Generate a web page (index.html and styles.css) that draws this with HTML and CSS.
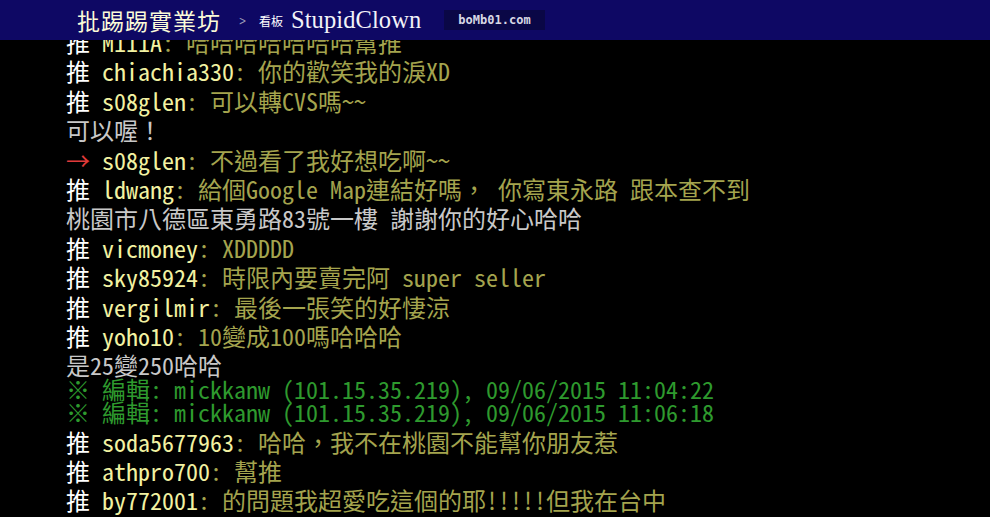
FILE: index.html
```html
<!DOCTYPE html>
<html lang="zh-Hant">
<head>
<meta charset="utf-8">
<title>批踢踢實業坊 StupidClown</title>
<link rel="stylesheet" href="styles.css">
</head>
<body>
<header class="topbar">
  <span class="site">批踢踢實業坊</span>
  <span class="chev">&gt;</span>
  <span class="board-label">看板</span>
  <span class="board">StupidClown</span>
  <span class="stamp">boMb01.com</span>
</header>
<main class="comments">
  <div class="push"><span class="tag">推 </span><span class="uid">M111A</span><span class="msg">: 哈哈哈哈哈哈哈幫推</span></div>
  <div class="push"><span class="tag">推 </span><span class="uid">chiachia330</span><span class="msg">: 你的歡笑我的淚XD</span></div>
  <div class="push"><span class="tag">推 </span><span class="uid">s08glen</span><span class="msg">: 可以轉CVS嗎~~</span></div>
  <div class="plain">可以喔！</div>
  <div class="push"><span class="tag arrow">→ </span><span class="uid">s08glen</span><span class="msg">: 不過看了我好想吃啊~~</span></div>
  <div class="push"><span class="tag">推 </span><span class="uid">ldwang</span><span class="msg">: 給個Google Map連結好嗎， 你寫東永路 跟本查不到</span></div>
  <div class="plain">桃園市八德區東勇路83號一樓 謝謝你的好心哈哈</div>
  <div class="push"><span class="tag">推 </span><span class="uid">vicmoney</span><span class="msg">: XDDDDD</span></div>
  <div class="push"><span class="tag">推 </span><span class="uid">sky85924</span><span class="msg">: 時限內要賣完阿 super seller</span></div>
  <div class="push"><span class="tag">推 </span><span class="uid">vergilmir</span><span class="msg">: 最後一張笑的好悽涼</span></div>
  <div class="push"><span class="tag">推 </span><span class="uid">yoho10</span><span class="msg">: 10變成100嗎哈哈哈</span></div>
  <div class="plain">是25變250哈哈</div>
  <div class="edit">※ 編輯: mickkanw (101.15.35.219), 09/06/2015 11:04:22</div>
  <div class="edit">※ 編輯: mickkanw (101.15.35.219), 09/06/2015 11:06:18</div>
  <div class="push"><span class="tag">推 </span><span class="uid">soda5677963</span><span class="msg">: 哈哈，我不在桃園不能幫你朋友惹</span></div>
  <div class="push"><span class="tag">推 </span><span class="uid">athpro700</span><span class="msg">: 幫推</span></div>
  <div class="push"><span class="tag">推 </span><span class="uid">by772001</span><span class="msg">: 的問題我超愛吃這個的耶!!!!!但我在台中</span></div>
</main>
</body>
</html>
```

FILE: styles.css
```css
html, body {
  margin: 0;
  padding: 0;
  background: #000;
  overflow: hidden;
}

body {
  width: 990px;
  height: 517px;
  position: relative;
  font-family: "Noto Sans Mono CJK TC", "Noto Sans CJK TC", monospace;
}

.topbar {
  position: absolute;
  top: 0;
  left: 0;
  right: 0;
  height: 40px;
  background: #0e0864;
  display: flex;
  align-items: center;
  padding-left: 77px;
  z-index: 2;
}

.site {
  font-family: "Noto Sans CJK TC", sans-serif;
  font-size: 23px;
  color: #fbfbd8;
  letter-spacing: 1px;
  line-height: 1;
}

.chev {
  font-family: "DejaVu Sans", sans-serif;
  font-size: 13px;
  color: #9a9ab8;
  margin-left: 16px;
  transform: scaleX(0.7);
}

.board-label {
  font-family: "Noto Sans CJK TC", sans-serif;
  font-size: 12px;
  color: #fff;
  margin-left: 11px;
}

.board {
  font-family: "Liberation Serif", serif;
  font-size: 24.5px;
  color: #f2f2f8;
  margin-left: 8px;
  letter-spacing: 0.1px;
}

.stamp {
  margin-left: 23px;
  background: #0a0746;
  color: #d8d8e4;
  font-family: "DejaVu Sans Mono", monospace;
  font-weight: bold;
  font-size: 12px;
  padding: 4px 14px;
  line-height: 12px;
}

.comments {
  padding-top: 27px;
  padding-left: 66px;
  font-size: 24px;
}

.push, .plain, .edit {
  white-space: pre;
}

.push, .plain {
  height: 29.4px;
  line-height: 29.4px;
}

.edit {
  height: 17.5px;
  line-height: 17.5px;
  padding-bottom: 6px;
  color: #2e9a2e;
}

.tag {
  color: #ffffff;
}

.arrow {
  color: #e03a3a;
}

.uid {
  color: #f2f2a2;
}

.msg {
  color: #a4a44e;
}

.plain {
  color: #c8c8c8;
}
```
